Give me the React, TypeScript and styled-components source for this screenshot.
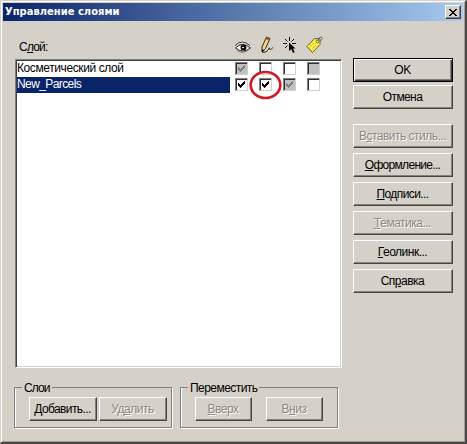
import React from "react";
import styled, { createGlobalStyle, css } from "styled-components";

const face = "#d5d0c8";

const GlobalStyle = createGlobalStyle`
  * { box-sizing: border-box; }
  html, body { margin: 0; padding: 0; overflow: hidden; background: ${face}; }
`;

const Dialog = styled.div`
  width: 467px;
  height: 444px;
  background: ${face};
  border-left: 1px solid ${face};
  border-top: 1px solid ${face};
  border-right: 2px solid #4a4844;
  border-bottom: 2px solid #4a4844;
  box-shadow: inset 1px 1px 0 #fff, inset -1px -1px 0 #a39f97;
  padding: 2px 2px 0 2px;
  font-family: "Liberation Sans", Arial, sans-serif;
  font-size: 12px;
  line-height: 14px;
  letter-spacing: -0.5px;
  color: #000;
  white-space: nowrap;
`;

const TitleBar = styled.header`
  height: 18px;
  display: flex;
  align-items: center;
  justify-content: space-between;
  padding: 0 2px;
  background: linear-gradient(90deg, #0a246a, #a6caf0);
`;

const Title = styled.span`
  font-family: "DejaVu Sans Condensed", "DejaVu Sans", sans-serif;
  font-stretch: condensed;
  font-weight: bold;
  font-size: 11px;
  letter-spacing: 0.05px;
  color: #fff;
`;

const CloseButton = styled.button`
  width: 16px;
  height: 14px;
  padding: 0;
  display: grid;
  place-items: center;
  background: ${face};
  border: 1px solid;
  border-color: #fff #404040 #404040 #fff;
  box-shadow: inset -1px -1px 0 #808080;
`;

const Columns = styled.div`
  display: flex;
  align-items: flex-start;
  gap: 11px;
  padding: 14px 0 0 12px;
`;

const LayerColumn = styled.section`
  width: 327px;
`;

const HeaderRow = styled.div`
  display: flex;
  height: 24px;
  align-items: flex-end;
`;

const HeaderLabel = styled.label`
  width: 219px;
  padding-left: 4px;
  height: 19px;
  letter-spacing: -0.8px;
`;

const HeaderIcon = styled.span`
  width: 24px;
  height: 23px;
  svg { display: block; }
`;

const ListBox = styled.div`
  height: 309px;
  background: #fff;
  border: 1px solid;
  border-color: #808080 #fff #fff #808080;
  box-shadow: inset 1px 1px 0 #404040, inset -1px -1px 0 ${face};
  padding: 1px 2px 2px 1px;
`;

const Row = styled.div`
  height: 16px;
  display: flex;
`;

const LayerName = styled.span<{ $selected?: boolean; $spacing: number }>`
  width: 213px;
  height: 16px;
  line-height: 15px;
  letter-spacing: ${(p) => p.$spacing}px;
  margin-right: 5px;
  color: ${(p) => (p.$selected ? "#fff" : "#000")};
  background: ${(p) => (p.$selected ? "#0a246a" : "transparent")};
`;

const Box = styled.span<{ $gray?: boolean }>`
  width: 13px;
  height: 13px;
  margin: 1px 11px 0 0;
  background: ${(p) => (p.$gray ? "#c0c0c0" : "#fff")};
  border: 1px solid;
  border-color: #808080 #d4d0c8 #d4d0c8 #808080;
  box-shadow: inset 1px 1px 0 #303030;
  svg { display: block; }
`;

const CellFrame = styled.span`
  position: relative;
  display: flex;
`;

const Highlight = styled.svg`
  position: absolute;
  left: -10px;
  top: -8px;
`;

const Actions = styled.aside`
  width: 100px;
  display: flex;
  flex-direction: column;
  gap: 5px;
`;

const PushButton = styled.button<{ $w: number; $spacing?: number; $primary?: boolean; $top?: number }>`
  width: ${(p) => p.$w}px;
  height: 24px;
  flex: none;
  margin: ${(p) => p.$top ?? 0}px 0 0;
  padding: 0 1px 1px 0;
  font: inherit;
  letter-spacing: ${(p) => p.$spacing ?? -0.5}px;
  white-space: nowrap;
  color: #000;
  background: ${face};
  border: 1px solid;
  border-color: #fff #484641 #484641 #fff;
  box-shadow: inset -1px -1px 0 #85827b;
  &:disabled {
    color: #8b8880;
    text-shadow: 1px 1px 0 #fff;
  }
  ${(p) =>
    p.$primary &&
    css`
      border-color: #000;
      box-shadow: inset 1px 1px 0 #fff, inset -1px -1px 0 #404040, inset -2px -2px 0 #808080;
    `}
`;

const Groups = styled.div`
  display: flex;
  gap: 8px;
  padding: 12px 0 0 11px;
`;

const Group = styled.fieldset`
  width: 158px;
  height: 48px;
  min-width: 0;
  margin: 0;
  border: 1px solid #808080;
  box-shadow: inset 1px 0 0 #fff, 1px 1px 0 #fff;
  padding: 3px 0 0 14px;
`;

const Legend = styled.legend<{ $spacing: number }>`
  height: 14px;
  line-height: 16px;
  padding: 0 2px;
  margin-left: -7px;
  letter-spacing: ${(p) => p.$spacing}px;
`;

const GroupButtons = styled.div<{ $gap: number }>`
  display: flex;
  gap: ${(p) => p.$gap}px;
`;

const Tick = ({ color }: { color: string }) => (
  <svg width="11" height="11" viewBox="0 0 11 11" shapeRendering="crispEdges">
    <path d="M2 4h1v1h1v1h1v-1h1v-1h1v-1h1v-1h1v3h-1v1h-1v1h-1v1h-1v1h-1v-1h-1v-1h-1z" fill={color} />
  </svg>
);

const EyeIcon = () => (
  <svg width="20" height="20" viewBox="0 0 20 20">
    <path d="M1.5 12Q8 5 16.5 12Q9 18 1.5 12Z" fill="#fff" stroke="#222" />
    <path d="M1 9.5Q8 2.5 16 9.5" fill="none" stroke="#444" />
    <circle cx="9.5" cy="11.5" r="3" fill="#111" />
    <path d="M8 11h2v1h-2z" fill="#dde" />
    <path d="M3 14.5Q9 18.5 15 13.5" fill="none" stroke="#777" />
  </svg>
);

const PencilIcon = () => (
  <svg width="20" height="20" viewBox="0 0 20 20">
    <path d="M4 11L8.5 1L12 2.5L7.5 12.5L4 16Z" fill="#efd690" stroke="#3c2a12" />
    <path d="M8.5 1L12 2.5L11.2 4.5L7.6 3Z" fill="#a8493a" />
    <path d="M4 13.5V16.5L6.5 14Z" fill="#000" />
    <path d="M4.5 16.5Q9 16.5 10.5 13.5Q11.5 10.5 11.5 13Q12 14.5 15 11.5" fill="none" stroke="#222" />
  </svg>
);

const SelectIcon = () => (
  <svg width="20" height="20" viewBox="0 0 20 20">
    <path d="M7.5 1V5M1 7.5H5M10 7.5H14M3 3L5.5 5.5M12 3L9.5 5.5M3 12L5.5 9.5" stroke="#111" fill="none" />
    <path d="M7 6.5V15L9.2 13L11 17L12.7 16.2L11 12.5H13.5Z" fill="#000" />
  </svg>
);

const TagIcon = () => (
  <svg width="20" height="20" viewBox="0 0 20 20">
    <path d="M1 10.5L8.5 2.5L14 3L14 8.5L6.5 16.5Z" fill="#fbee48" stroke="#6a6118" />
    <path d="M4 10.5L8.5 6.5M6.5 12.5L10.5 8.5" stroke="#b3a52a" strokeDasharray="2 1" />
    <circle cx="11.5" cy="5.5" r="1.3" fill="#fff" stroke="#444" strokeWidth=".8" />
    <path d="M12 5Q12 1 15 1Q18 2 14 5.5" fill="none" stroke="#555" strokeWidth=".8" />
  </svg>
);

type Cell = { checked?: boolean; gray?: boolean; marked?: boolean };
const layers: { name: string; spacing: number; selected?: boolean; cells: Cell[] }[] = [
  { name: "Косметический слой", spacing: -0.4, cells: [{ checked: true, gray: true }, {}, {}, { gray: true }] },
  {
    name: "New_Parcels",
    spacing: -0.6,
    selected: true,
    cells: [{ checked: true }, { checked: true, marked: true }, { checked: true, gray: true }, {}],
  },
];

const CheckCell = ({ checked, gray, marked }: Cell) => (
  <CellFrame>
    <Box $gray={gray}>{checked && <Tick color={gray ? "#808080" : "#000"} />}</Box>
    {marked && (
      <Highlight width="34" height="31" viewBox="0 0 34 31">
        <ellipse cx="16.5" cy="16" rx="14.8" ry="13" fill="none" stroke="#cf1c24" strokeWidth="2.7" />
      </Highlight>
    )}
  </CellFrame>
);

export default function App() {
  return (
    <>
      <GlobalStyle />
      <Dialog>
        <TitleBar>
          <Title>Управление слоями</Title>
          <CloseButton aria-label="Закрыть">
            <svg width="8" height="7" viewBox="0 0 8 7" shapeRendering="crispEdges">
              <path d="M0 0h2v1h1v1h2v-1h1v-1h2v1h-1v1h-1v1h-1v1h1v1h1v1h1v1h-2v-1h-1v-1h-2v1h-1v1h-2v-1h1v-1h1v-1h1v-1h-1v-1h-1v-1h-1z" fill="#000" />
            </svg>
          </CloseButton>
        </TitleBar>
        <Columns>
          <LayerColumn>
            <HeaderRow>
              <HeaderLabel>С<u>л</u>ой:</HeaderLabel>
              <HeaderIcon><EyeIcon /></HeaderIcon>
              <HeaderIcon><PencilIcon /></HeaderIcon>
              <HeaderIcon><SelectIcon /></HeaderIcon>
              <HeaderIcon><TagIcon /></HeaderIcon>
            </HeaderRow>
            <ListBox>
              {layers.map((layer) => (
                <Row key={layer.name}>
                  <LayerName $selected={layer.selected} $spacing={layer.spacing}>{layer.name}</LayerName>
                  {layer.cells.map((cell, i) => <CheckCell key={i} {...cell} />)}
                </Row>
              ))}
            </ListBox>
          </LayerColumn>
          <Actions>
            <PushButton $w={100} $primary $top={23}>OK</PushButton>
            <PushButton $w={100} $top={-2} $spacing={-0.6}>Отмена</PushButton>
            <PushButton $w={100} $top={10} disabled>В<u>с</u>тавить стиль...</PushButton>
            <PushButton $w={100} $spacing={-0.7}><u>О</u>формление...</PushButton>
            <PushButton $w={100} $spacing={-0.6}><u>П</u>одписи...</PushButton>
            <PushButton $w={100} disabled><u>Т</u>ематика...</PushButton>
            <PushButton $w={100}><u>Г</u>еолинк...</PushButton>
            <PushButton $w={100}>Сп<u>р</u>авка</PushButton>
          </Actions>
        </Columns>
        <Groups>
          <Group>
            <Legend $spacing={-0.9}>Слои</Legend>
            <GroupButtons $gap={2}>
              <PushButton $w={68} $spacing={-0.6}><u>Д</u>обавить...</PushButton>
              <PushButton $w={68} disabled>Уд<u>а</u>лить</PushButton>
            </GroupButtons>
          </Group>
          <Group>
            <Legend $spacing={-0.55}>Переместить</Legend>
            <GroupButtons $gap={14}>
              <PushButton $w={57} disabled><u>В</u>верх</PushButton>
              <PushButton $w={57} disabled>В<u>н</u>из</PushButton>
            </GroupButtons>
          </Group>
        </Groups>
      </Dialog>
    </>
  );
}
